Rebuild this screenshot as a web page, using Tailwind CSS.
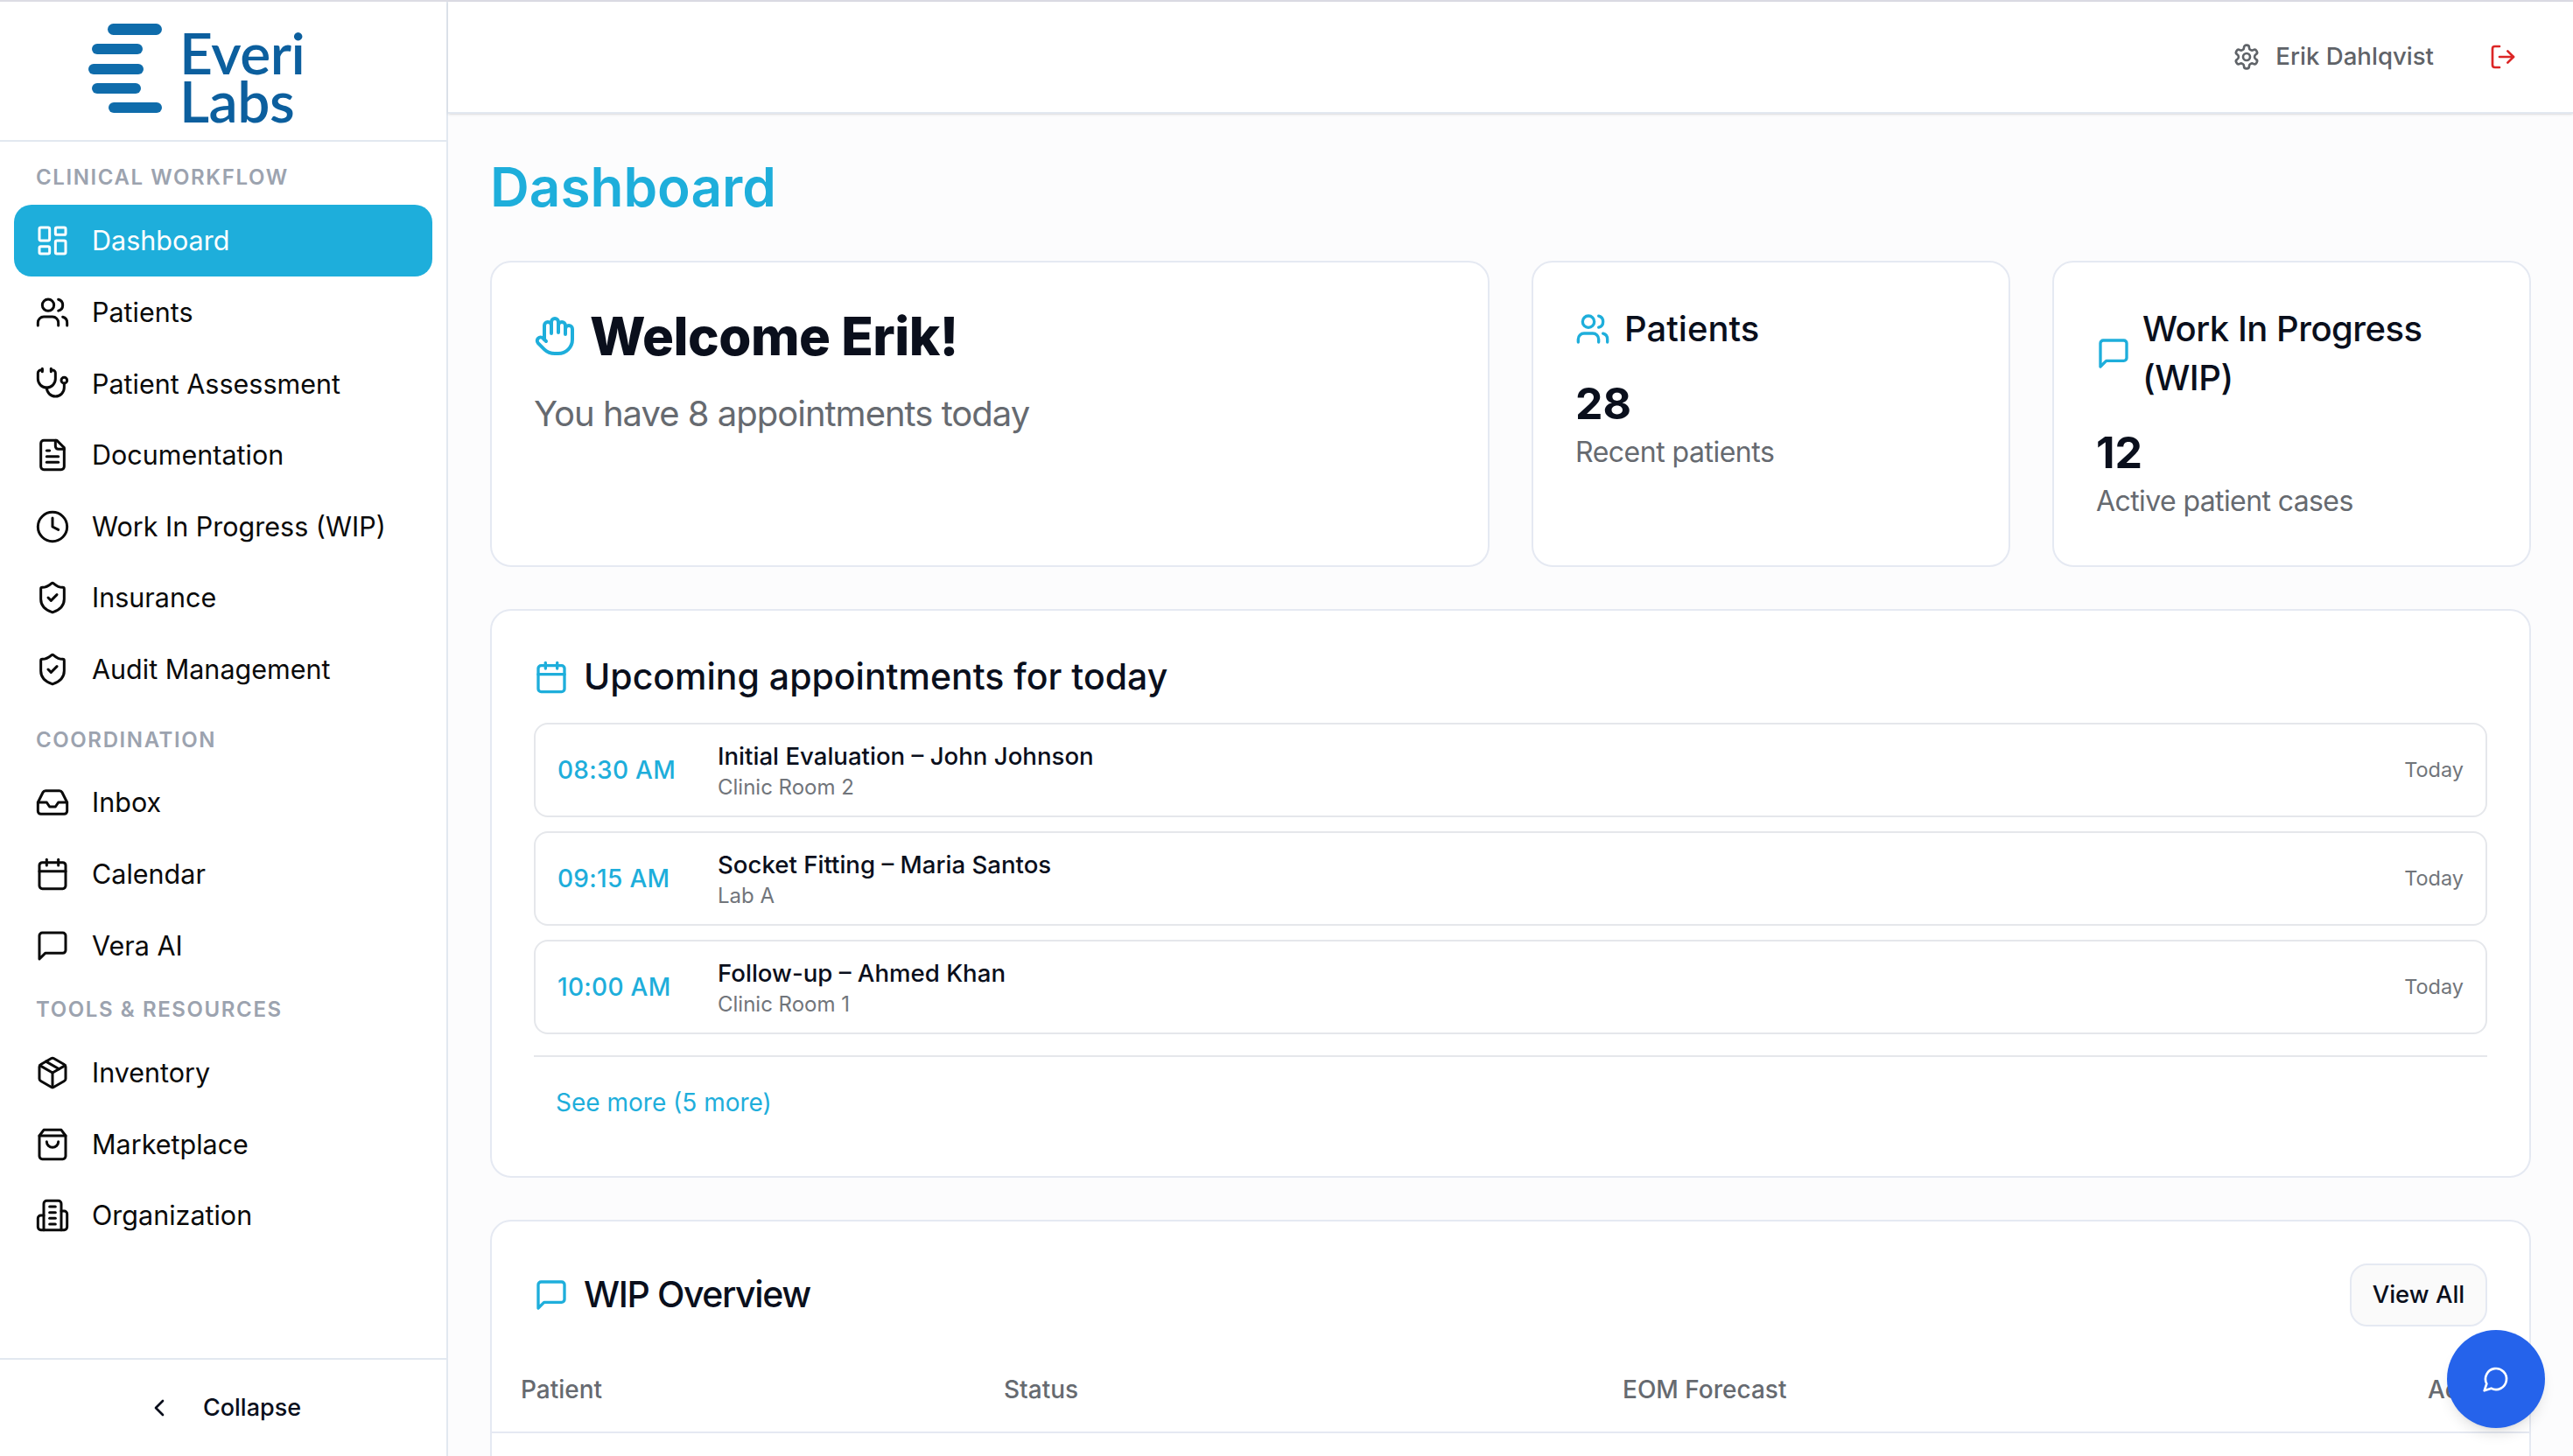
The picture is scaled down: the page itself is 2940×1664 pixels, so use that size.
<!DOCTYPE html>
<html lang="en">
<head>
    <meta charset="UTF-8">
    <meta name="viewport" content="width=device-width, initial-scale=1.0">
    <title>Everi Labs Dashboard</title>
    <script src="https://cdn.jsdelivr.net/npm/@tailwindcss/browser@4"></script>
</head>
<body class="h-screen overflow-hidden bg-[#fcfcfd] font-[family-name:Inter,sans-serif] text-[#0a0f1c]">
    <div class="flex h-screen border-t-2 border-[#dcdce4]">
        <!-- Sidebar -->
        <aside class="flex h-full w-[512px] shrink-0 flex-col border-r-2 border-[#e2e8f0] bg-white">
            <div class="flex h-[160px] shrink-0 items-start border-b-2 border-[#e2e8f0] pl-[101px] pt-[25px]">
                <svg class="mr-[20px] shrink-0" width="84" height="104" viewBox="0 0 84 104" fill="#0f6cab">
                    <rect x="22" y="0" width="62" height="13" rx="6.5"/>
                    <rect x="4" y="23" width="58" height="12" rx="6"/>
                    <rect x="0" y="46" width="63" height="12" rx="6"/>
                    <rect x="4" y="68" width="56" height="12" rx="6"/>
                    <rect x="23" y="90" width="61" height="12" rx="6"/>
                </svg>
                <div class="mt-[5px] font-[family-name:Lato,sans-serif] text-[66px] leading-[55px] font-semibold tracking-[-0.5px] text-[#0c5f9e]">Everi<br>Labs</div>
            </div>
            <nav class="flex-1 px-4 text-[30.5px] text-[#0a0a0a]">
                <div class="mt-[10px] flex h-[62px] items-center pl-[25px] text-[24px] font-semibold tracking-[1.6px] text-[#9ca3af]">CLINICAL WORKFLOW</div>
                <a class="flex h-[82px] items-center gap-[25px] rounded-[20px] bg-[#1eaedb] px-[24px] text-white">
                    <svg class="size-[40px] shrink-0" viewBox="0 0 24 24" fill="none" stroke="currentColor" stroke-width="1.8" stroke-linecap="round" stroke-linejoin="round"><rect x="3" y="3" width="7" height="9" rx="1"/><rect x="14" y="3" width="7" height="5" rx="1"/><rect x="14" y="12" width="7" height="9" rx="1"/><rect x="3" y="16" width="7" height="5" rx="1"/></svg>
                    Dashboard
                </a>
                <a class="flex h-[81.6px] items-center gap-[25px] px-[24px]">
                    <svg class="size-[40px] shrink-0" viewBox="0 0 24 24" fill="none" stroke="currentColor" stroke-width="1.8" stroke-linecap="round" stroke-linejoin="round"><path d="M16 21v-2a4 4 0 0 0-4-4H6a4 4 0 0 0-4 4v2"/><circle cx="9" cy="7" r="4"/><path d="M22 21v-2a4 4 0 0 0-3-3.87"/><path d="M16 3.13a4 4 0 0 1 0 7.75"/></svg>
                    Patients
                </a>
                <a class="flex h-[81.6px] items-center gap-[25px] px-[24px]">
                    <svg class="size-[40px] shrink-0" viewBox="0 0 24 24" fill="none" stroke="currentColor" stroke-width="1.8" stroke-linecap="round" stroke-linejoin="round"><path d="M11 2v2"/><path d="M5 2v2"/><path d="M5 3H4a2 2 0 0 0-2 2v4a6 6 0 0 0 12 0V5a2 2 0 0 0-2-2h-1"/><path d="M8 15a6 6 0 0 0 12 0v-3"/><circle cx="20" cy="10" r="2"/></svg>
                    Patient Assessment
                </a>
                <a class="flex h-[81.6px] items-center gap-[25px] px-[24px]">
                    <svg class="size-[40px] shrink-0" viewBox="0 0 24 24" fill="none" stroke="currentColor" stroke-width="1.8" stroke-linecap="round" stroke-linejoin="round"><path d="M15 2H6a2 2 0 0 0-2 2v16a2 2 0 0 0 2 2h12a2 2 0 0 0 2-2V7Z"/><path d="M14 2v4a2 2 0 0 0 2 2h4"/><path d="M10 9H8"/><path d="M16 13H8"/><path d="M16 17H8"/></svg>
                    Documentation
                </a>
                <a class="flex h-[81.6px] items-center gap-[25px] px-[24px]">
                    <svg class="size-[40px] shrink-0" viewBox="0 0 24 24" fill="none" stroke="currentColor" stroke-width="1.8" stroke-linecap="round" stroke-linejoin="round"><circle cx="12" cy="12" r="10"/><polyline points="12 6 12 12 16 14"/></svg>
                    Work In Progress (WIP)
                </a>
                <a class="flex h-[81.6px] items-center gap-[25px] px-[24px]">
                    <svg class="size-[40px] shrink-0" viewBox="0 0 24 24" fill="none" stroke="currentColor" stroke-width="1.8" stroke-linecap="round" stroke-linejoin="round"><path d="M20 13c0 5-3.5 7.5-7.66 8.95a1 1 0 0 1-.67-.01C7.5 20.5 4 18 4 13V6a1 1 0 0 1 1-1c2 0 4.5-1.2 6.24-2.72a1.17 1.17 0 0 1 1.52 0C14.51 3.81 17 5 19 5a1 1 0 0 1 1 1z"/><path d="m9 12 2 2 4-4"/></svg>
                    Insurance
                </a>
                <a class="flex h-[81.6px] items-center gap-[25px] px-[24px]">
                    <svg class="size-[40px] shrink-0" viewBox="0 0 24 24" fill="none" stroke="currentColor" stroke-width="1.8" stroke-linecap="round" stroke-linejoin="round"><path d="M20 13c0 5-3.5 7.5-7.66 8.95a1 1 0 0 1-.67-.01C7.5 20.5 4 18 4 13V6a1 1 0 0 1 1-1c2 0 4.5-1.2 6.24-2.72a1.17 1.17 0 0 1 1.52 0C14.51 3.81 17 5 19 5a1 1 0 0 1 1 1z"/><path d="m9 12 2 2 4-4"/></svg>
                    Audit Management
                </a>

                <div class="mt-[9px] flex h-[62px] items-center pl-[25px] text-[24px] font-semibold tracking-[1.6px] text-[#9ca3af]">COORDINATION</div>
                <a class="flex h-[81.6px] items-center gap-[25px] px-[24px]">
                    <svg class="size-[40px] shrink-0" viewBox="0 0 24 24" fill="none" stroke="currentColor" stroke-width="1.8" stroke-linecap="round" stroke-linejoin="round"><polyline points="22 12 16 12 14 15 10 15 8 12 2 12"/><path d="M5.45 5.11 2 12v6a2 2 0 0 0 2 2h16a2 2 0 0 0 2-2v-6l-3.45-6.89A2 2 0 0 0 16.76 4H7.24a2 2 0 0 0-1.79 1.11z"/></svg>
                    Inbox
                </a>
                <a class="flex h-[81.6px] items-center gap-[25px] px-[24px]">
                    <svg class="size-[40px] shrink-0" viewBox="0 0 24 24" fill="none" stroke="currentColor" stroke-width="1.8" stroke-linecap="round" stroke-linejoin="round"><path d="M8 2v4"/><path d="M16 2v4"/><rect x="3" y="4" width="18" height="18" rx="2"/><path d="M3 10h18"/></svg>
                    Calendar
                </a>
                <a class="flex h-[81.6px] items-center gap-[25px] px-[24px]">
                    <svg class="size-[40px] shrink-0" viewBox="0 0 24 24" fill="none" stroke="currentColor" stroke-width="1.8" stroke-linecap="round" stroke-linejoin="round"><path d="M21 15a2 2 0 0 1-2 2H7l-4 4V5a2 2 0 0 1 2-2h14a2 2 0 0 1 2 2z"/></svg>
                    Vera AI
                </a>

                <div class="mt-[2px] flex h-[62px] items-center pl-[25px] text-[24px] font-semibold tracking-[1.6px] text-[#9ca3af]">TOOLS &amp; RESOURCES</div>
                <a class="flex h-[81.6px] items-center gap-[25px] px-[24px]">
                    <svg class="size-[40px] shrink-0" viewBox="0 0 24 24" fill="none" stroke="currentColor" stroke-width="1.8" stroke-linecap="round" stroke-linejoin="round"><path d="m7.5 4.27 9 5.15"/><path d="M21 8a2 2 0 0 0-1-1.73l-7-4a2 2 0 0 0-2 0l-7 4A2 2 0 0 0 3 8v8a2 2 0 0 0 1 1.73l7 4a2 2 0 0 0 2 0l7-4A2 2 0 0 0 21 16Z"/><path d="m3.3 7 8.7 5 8.7-5"/><path d="M12 22V12"/></svg>
                    Inventory
                </a>
                <a class="flex h-[81.6px] items-center gap-[25px] px-[24px]">
                    <svg class="size-[40px] shrink-0" viewBox="0 0 24 24" fill="none" stroke="currentColor" stroke-width="1.8" stroke-linecap="round" stroke-linejoin="round"><path d="M6 2 3 6v14a2 2 0 0 0 2 2h14a2 2 0 0 0 2-2V6l-3-4Z"/><path d="M3 6h18"/><path d="M16 10a4 4 0 0 1-8 0"/></svg>
                    Marketplace
                </a>
                <a class="flex h-[81.6px] items-center gap-[25px] px-[24px]">
                    <svg class="size-[40px] shrink-0" viewBox="0 0 24 24" fill="none" stroke="currentColor" stroke-width="1.8" stroke-linecap="round" stroke-linejoin="round"><path d="M6 22V4a2 2 0 0 1 2-2h8a2 2 0 0 1 2 2v18Z"/><path d="M6 12H4a2 2 0 0 0-2 2v6a2 2 0 0 0 2 2h2"/><path d="M18 9h2a2 2 0 0 1 2 2v9a2 2 0 0 1-2 2h-2"/><path d="M10 6h4"/><path d="M10 10h4"/><path d="M10 14h4"/><path d="M10 18h4"/></svg>
                    Organization
                </a>
            </nav>
            <div class="flex h-[112px] shrink-0 items-center justify-center gap-[34px] border-t-2 border-[#e2e8f0] text-[27px] font-medium">
                <svg class="size-[32px]" viewBox="0 0 24 24" fill="none" stroke="currentColor" stroke-width="2" stroke-linecap="round" stroke-linejoin="round"><path d="m15 18-6-6 6-6"/></svg>
                Collapse
            </div>
        </aside>

        <!-- Main -->
        <div class="flex min-w-0 flex-1 flex-col">
            <header class="flex h-[128px] shrink-0 items-center justify-end border-b-2 border-[#e2e8f0] bg-white pr-[64px] shadow-sm">
                <svg class="size-[32px] text-[#5f6368]" viewBox="0 0 24 24" fill="none" stroke="currentColor" stroke-width="2" stroke-linecap="round" stroke-linejoin="round"><path d="M12.22 2h-.44a2 2 0 0 0-2 2v.18a2 2 0 0 1-1 1.73l-.43.25a2 2 0 0 1-2 0l-.15-.08a2 2 0 0 0-2.73.73l-.22.38a2 2 0 0 0 .73 2.73l.15.1a2 2 0 0 1 1 1.72v.51a2 2 0 0 1-1 1.74l-.15.09a2 2 0 0 0-.73 2.73l.22.38a2 2 0 0 0 2.73.73l.15-.08a2 2 0 0 1 2 0l.43.25a2 2 0 0 1 1 1.73V20a2 2 0 0 0 2 2h.44a2 2 0 0 0 2-2v-.18a2 2 0 0 1 1-1.73l.43-.25a2 2 0 0 1 2 0l.15.08a2 2 0 0 0 2.73-.73l.22-.39a2 2 0 0 0-.73-2.73l-.15-.08a2 2 0 0 1-1-1.74v-.5a2 2 0 0 1 1-1.74l.15-.09a2 2 0 0 0 .73-2.73l-.22-.38a2 2 0 0 0-2.73-.73l-.15.08a2 2 0 0 1-2 0l-.43-.25a2 2 0 0 1-1-1.73V4a2 2 0 0 0-2-2z"/><circle cx="12" cy="12" r="3"/></svg>
                <span class="ml-[17px] text-[27.6px] font-medium text-[#5f6368]">Erik Dahlqvist</span>
                <svg class="ml-[63px] size-[32px] text-[#dc2626]" viewBox="0 0 24 24" fill="none" stroke="currentColor" stroke-width="2" stroke-linecap="round" stroke-linejoin="round"><path d="M9 21H5a2 2 0 0 1-2-2V5a2 2 0 0 1 2-2h4"/><polyline points="16 17 21 12 16 7"/><line x1="21" y1="12" x2="9" y2="12"/></svg>
            </header>

            <main class="flex-1 overflow-hidden px-[48px] pt-[48px]">
                <h1 class="h-[72px] text-[62px] leading-[72px] font-semibold text-[#1eaedb]">Dashboard</h1>

                <div class="mt-[48px] grid grid-cols-4 gap-[48px]">
                    <div class="col-span-2 rounded-[24px] border-2 border-[#e5e9f2] bg-white p-[48px]">
                        <div class="flex h-[72px] items-center gap-[16px]">
                            <svg class="size-[48px] shrink-0 text-[#1eaedb]" viewBox="0 0 24 24" fill="none" stroke="currentColor" stroke-width="2" stroke-linecap="round" stroke-linejoin="round"><path d="M18 11V6a2 2 0 0 0-2-2a2 2 0 0 0-2 2"/><path d="M14 10V4a2 2 0 0 0-2-2a2 2 0 0 0-2 2v2"/><path d="M10 10.5V6a2 2 0 0 0-2-2a2 2 0 0 0-2 2v8"/><path d="M18 8a2 2 0 1 1 4 0v6a8 8 0 0 1-8 8h-2c-2.8 0-4.5-.86-5.99-2.34l-3.6-3.6a2 2 0 0 1 2.83-2.82L7 15"/></svg>
                            <h2 class="text-[60px] font-extrabold tracking-[-0.5px]">Welcome Erik!</h2>
                        </div>
                        <p class="mt-[25px] text-[40px] leading-[56px] tracking-[-1px] text-[#666a70]">You have 8 appointments today</p>
                    </div>

                    <div class="rounded-[24px] border-2 border-[#e5e9f2] bg-white p-[48px]">
                        <div class="flex items-center gap-[16px]">
                            <svg class="size-[40px] shrink-0 text-[#1eaedb]" viewBox="0 0 24 24" fill="none" stroke="currentColor" stroke-width="2" stroke-linecap="round" stroke-linejoin="round"><path d="M16 21v-2a4 4 0 0 0-4-4H6a4 4 0 0 0-4 4v2"/><circle cx="9" cy="7" r="4"/><path d="M22 21v-2a4 4 0 0 0-3-3.87"/><path d="M16 3.13a4 4 0 0 1 0 7.75"/></svg>
                            <h3 class="text-[40px] leading-[56px] font-medium">Patients</h3>
                        </div>
                        <div class="mt-[27px] text-[50px] leading-[60px] font-bold">28</div>
                        <p class="mt-[4px] text-[32px] leading-[44px] tracking-[-0.5px] text-[#666a70]">Recent patients</p>
                    </div>

                    <div class="rounded-[24px] border-2 border-[#e5e9f2] bg-white px-[48px] pt-[48px] pb-[51px]">
                        <div class="flex items-center gap-[13px]">
                            <svg class="size-[40px] shrink-0 text-[#1eaedb]" viewBox="0 0 24 24" fill="none" stroke="currentColor" stroke-width="2" stroke-linecap="round" stroke-linejoin="round"><path d="M21 15a2 2 0 0 1-2 2H7l-4 4V5a2 2 0 0 1 2-2h14a2 2 0 0 1 2 2z"/></svg>
                            <h3 class="w-[360px] text-[40px] leading-[56px] font-medium tracking-[-0.5px]">Work In Progress (WIP)</h3>
                        </div>
                        <div class="mt-[27px] text-[50px] leading-[60px] font-bold">12</div>
                        <p class="mt-[4px] text-[32px] leading-[44px] tracking-[-0.6px] text-[#666a70]">Active patient cases</p>
                    </div>
                </div>

                <section class="mt-[48px] rounded-[24px] border-2 border-[#e5e9f2] bg-white p-[48px]">
                    <div class="flex h-[56px] items-center gap-[17px]">
                        <svg class="size-[40px] shrink-0 text-[#1eaedb]" viewBox="0 0 24 24" fill="none" stroke="currentColor" stroke-width="2" stroke-linecap="round" stroke-linejoin="round"><path d="M8 2v4"/><path d="M16 2v4"/><rect x="3" y="4" width="18" height="18" rx="2"/><path d="M3 10h18"/></svg>
                        <h3 class="text-[41px] font-medium">Upcoming appointments for today</h3>
                    </div>
                    <div class="mt-[24px] flex flex-col gap-[16px]">
                        <div class="flex h-[108px] items-center rounded-[16px] border-2 border-[#e5e7eb] px-[25px]">
                            <span class="w-[183px] shrink-0 text-[28px] font-medium tracking-[0.3px] text-[#1eaedb]">08:30 AM</span>
                            <div class="flex-1">
                                <div class="text-[27.6px] leading-[40px] font-medium">Initial Evaluation – John Johnson</div>
                                <div class="text-[24px] leading-[32px] text-[#71757b]">Clinic Room 2</div>
                            </div>
                            <span class="text-[23.5px] text-[#71757b]">Today</span>
                        </div>
                        <div class="flex h-[108px] items-center rounded-[16px] border-2 border-[#e5e7eb] px-[25px]">
                            <span class="w-[183px] shrink-0 text-[28px] font-medium tracking-[0.3px] text-[#1eaedb]">09:15 AM</span>
                            <div class="flex-1">
                                <div class="text-[27.6px] leading-[40px] font-medium">Socket Fitting – Maria Santos</div>
                                <div class="text-[24px] leading-[32px] text-[#71757b]">Lab A</div>
                            </div>
                            <span class="text-[23.5px] text-[#71757b]">Today</span>
                        </div>
                        <div class="flex h-[108px] items-center rounded-[16px] border-2 border-[#e5e7eb] px-[25px]">
                            <span class="w-[183px] shrink-0 text-[28px] font-medium tracking-[0.3px] text-[#1eaedb]">10:00 AM</span>
                            <div class="flex-1">
                                <div class="text-[27.6px] leading-[40px] font-medium">Follow-up – Ahmed Khan</div>
                                <div class="text-[24px] leading-[32px] text-[#71757b]">Clinic Room 1</div>
                            </div>
                            <span class="text-[23.5px] text-[#71757b]">Today</span>
                        </div>
                    </div>
                    <div class="mt-[24px] border-t-2 border-[#e5e7eb] pt-[16px]">
                        <a class="flex h-[72px] items-center pl-[25px] text-[28px] text-[#1eaedb]">See more (5 more)</a>
                    </div>
                </section>

                <section class="mt-[48px] rounded-[24px] border-2 border-[#e5e9f2] bg-white pt-[48px]">
                    <div class="flex h-[72px] items-center justify-between px-[48px]">
                        <div class="flex items-center gap-[17px]">
                            <svg class="size-[40px] shrink-0 text-[#1eaedb]" viewBox="0 0 24 24" fill="none" stroke="currentColor" stroke-width="2" stroke-linecap="round" stroke-linejoin="round"><path d="M21 15a2 2 0 0 1-2 2H7l-4 4V5a2 2 0 0 1 2-2h14a2 2 0 0 1 2 2z"/></svg>
                            <h3 class="text-[41px] font-medium tracking-[-1.4px]">WIP Overview</h3>
                        </div>
                        <button class="h-[72px] w-[157px] rounded-[20px] border-2 border-[#e5e9f2] bg-[#fafafa] text-[27.5px] font-medium">View All</button>
                    </div>
                    <div class="mt-[24px] grid h-[98px] grid-cols-[552px_707px_920px_1fr] items-center border-b-2 border-[#e5e9f2] pl-[33px] text-[28px] font-medium text-[#666a70]">
                        <span>Patient</span>
                        <span>Status</span>
                        <span>EOM Forecast</span>
                        <span>Actions</span>
                    </div>
                    <div class="h-[120px]"></div>
                </section>
            </main>
        </div>
    </div>

    <button class="fixed right-[32px] bottom-[32px] flex size-[112px] items-center justify-center rounded-full bg-[#2563eb] text-white shadow-lg">
        <svg class="size-[32px]" viewBox="0 0 24 24" fill="none" stroke="currentColor" stroke-width="2" stroke-linecap="round" stroke-linejoin="round"><path d="M7.9 20A9 9 0 1 0 4 16.1L2 22Z"/></svg>
    </button>
</body>
</html>
